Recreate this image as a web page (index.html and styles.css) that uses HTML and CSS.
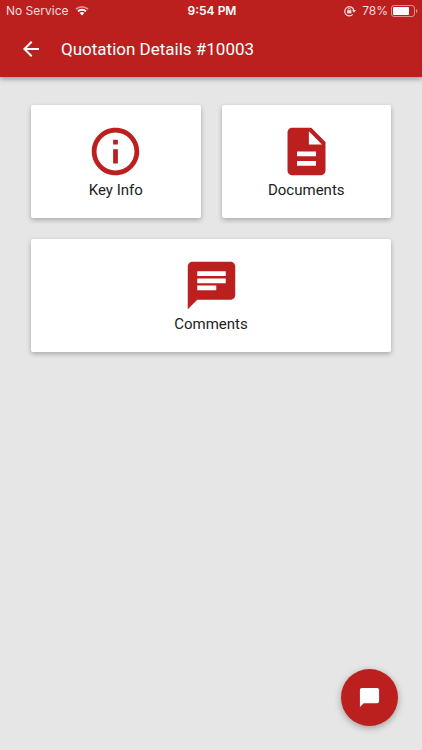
FILE: index.html
```html
<!DOCTYPE html>
<html lang="en">
<head>
<meta charset="utf-8">
<meta name="viewport" content="width=device-width, initial-scale=1">
<title>Quotation Details</title>
<link rel="stylesheet" href="styles.css">
</head>
<body>
<header class="header">
  <div class="status">
    <div class="status-side">
      <span>No Service</span>
      <svg class="wifi" viewBox="0 0 14 11" aria-hidden="true">
        <path class="faint" d="M1 4.2a8.7 8.7 0 0 1 12 0" fill="none" stroke="currentColor" stroke-width="1.8"/>
        <path d="M3 6.4a5.800 5.800 0 0 1 8 0" fill="none" stroke="currentColor" stroke-width="2"/>
        <path d="M4.700 8.100a3.200 3.200 0 0 1 4.600 0L7 10.600z" fill="currentColor"/>
      </svg>
    </div>
    <time class="clock">9:54 PM</time>
    <div class="status-side status-end">
      <svg class="lock" viewBox="0 0 12 12" aria-hidden="true">
        <path d="M8.800 9.400A4.600 4.600 0 1 1 9.800 5" fill="none" stroke="currentColor" stroke-width="1.200"/>
        <path d="M8 5.100h4L10 7.700z" fill="currentColor"/>
        <rect x="3.200" y="5.200" width="4.200" height="3.200" fill="currentColor"/>
        <path d="M4.100 5.400V4.500a1.200 1.200 0 0 1 2.400 0v.9" fill="none" stroke="currentColor" stroke-width=".9"/>
      </svg>
      <span>78%</span>
      <svg class="battery" viewBox="0 0 27 12" aria-hidden="true">
        <rect class="faint" x=".5" y=".5" width="23" height="11" rx="2.500" fill="none" stroke="currentColor"/>
        <rect x="2" y="2" width="16" height="8" rx="1" fill="currentColor"/>
        <path class="faint" d="M25 4v4q1.500-.6 1.500-2T25 4z" fill="currentColor"/>
      </svg>
    </div>
  </div>
  <div class="toolbar">
    <button class="back" type="button" aria-label="Back">
      <svg viewBox="0 0 24 24" aria-hidden="true"><path d="M20 11H7.830l5.590-5.590L12 4l-8 8 8 8 1.410-1.410L7.830 13H20v-2z"/></svg>
    </button>
    <h1 class="title">Quotation Details #10003</h1>
  </div>
</header>
<main class="cards">
  <button class="card" type="button">
    <svg viewBox="0 0 24 24" aria-hidden="true"><path d="M11 17h2v-6h-2v6zm1-15C6.480 2 2 6.480 2 12s4.480 10 10 10 10-4.480 10-10S17.520 2 12 2zm0 18c-4.410 0-8-3.590-8-8s3.590-8 8-8 8 3.590 8 8-3.590 8-8 8zM11 9h2V7h-2v2z"/></svg>
    <span>Key Info</span>
  </button>
  <button class="card" type="button">
    <svg viewBox="0 0 24 24" aria-hidden="true"><path d="M14 2H6c-1.100 0-1.990.9-1.990 2L4 20c0 1.100.89 2 1.990 2H18c1.100 0 2-.9 2-2V8l-6-6zm2 16H8v-2h8v2zm0-4H8v-2h8v2zm-3-5V3.500L18.500 9H13z"/></svg>
    <span>Documents</span>
  </button>
  <button class="card card-wide" type="button">
    <svg viewBox="0 0 24 24" aria-hidden="true"><path d="M20 2H4c-1.100 0-1.990.9-1.990 2L2 22l4-4h14c1.100 0 2-.9 2-2V4c0-1.100-.9-2-2-2zM6 9h12v2H6V9zm8 5H6v-2h8v2zm4-6H6V6h12v2z"/></svg>
    <span>Comments</span>
  </button>
</main>
<button class="fab" type="button" aria-label="New comment">
  <svg viewBox="0 0 24 24" aria-hidden="true"><path d="M20 2H4c-1.100 0-2 .9-2 2v18l4-4h14c1.100 0 2-.9 2-2V4c0-1.100-.9-2-2-2z"/></svg>
</button>
</body>
</html>
```
FILE: styles.css
```css
* {
  box-sizing: border-box;
}

body {
  margin: 0;
  min-height: 100vh;
  background: #e6e6e6;
  color: #212121;
  font-family: Roboto, "Liberation Sans", sans-serif;
}

button {
  border: 0;
  padding: 0;
  font: inherit;
  color: inherit;
  cursor: pointer;
}

svg {
  display: block;
  flex: none;
}

.header {
  background: #bb201f;
  color: #fff;
  box-shadow: 0 2px 5px rgba(0, 0, 0, .35);
}

.status {
  display: grid;
  grid-template-columns: 1fr auto 1fr;
  align-items: center;
  height: 21px;
  padding: 0 4px 0 6px;
  font-family: Inter, sans-serif;
  font-size: 12px;
}

.status-side {
  display: flex;
  align-items: center;
  gap: 6px;
  color: #f8dcdc;
}

.status-end {
  justify-content: flex-end;
  gap: 3px;
}

.status-end .lock {
  margin-right: 3px;
}

.clock {
  font-weight: 600;
}

.wifi {
  width: 14px;
  height: 11px;
  color: #fff;
}

.lock {
  width: 12px;
  height: 12px;
}

.battery {
  width: 27px;
  height: 12px;
  color: #fff;
}

.faint {
  opacity: .5;
}

.toolbar {
  display: flex;
  align-items: center;
  gap: 18px;
  height: 56px;
  padding: 0 19px;
}

.back {
  background: none;
}

.back svg {
  width: 24px;
  height: 24px;
  fill: #fff;
}

.title {
  margin: 0;
  font-size: 17px;
  font-weight: 400;
  line-height: 24px;
}

.cards {
  display: grid;
  grid-template-columns: 1fr 1fr;
  gap: 21px;
  padding: 28px 31px;
}

.card {
  display: flex;
  flex-direction: column;
  align-items: center;
  padding: 18px 8px;
  border-radius: 2px;
  background: #fff;
  box-shadow: 0 2px 5px rgba(0, 0, 0, .27);
  font-size: 15px;
  line-height: 20px;
}

.card svg {
  width: 57px;
  height: 57px;
  fill: #bb201f;
}

.card-wide {
  grid-column: 1 / -1;
}

.fab {
  position: fixed;
  right: 24px;
  bottom: 24px;
  display: grid;
  place-items: center;
  width: 57px;
  height: 57px;
  border-radius: 50%;
  background: #bb201f;
  box-shadow: 0 2px 7px rgba(0, 0, 0, .32);
}

.fab svg {
  width: 23px;
  height: 23px;
  fill: #fff;
}
```
